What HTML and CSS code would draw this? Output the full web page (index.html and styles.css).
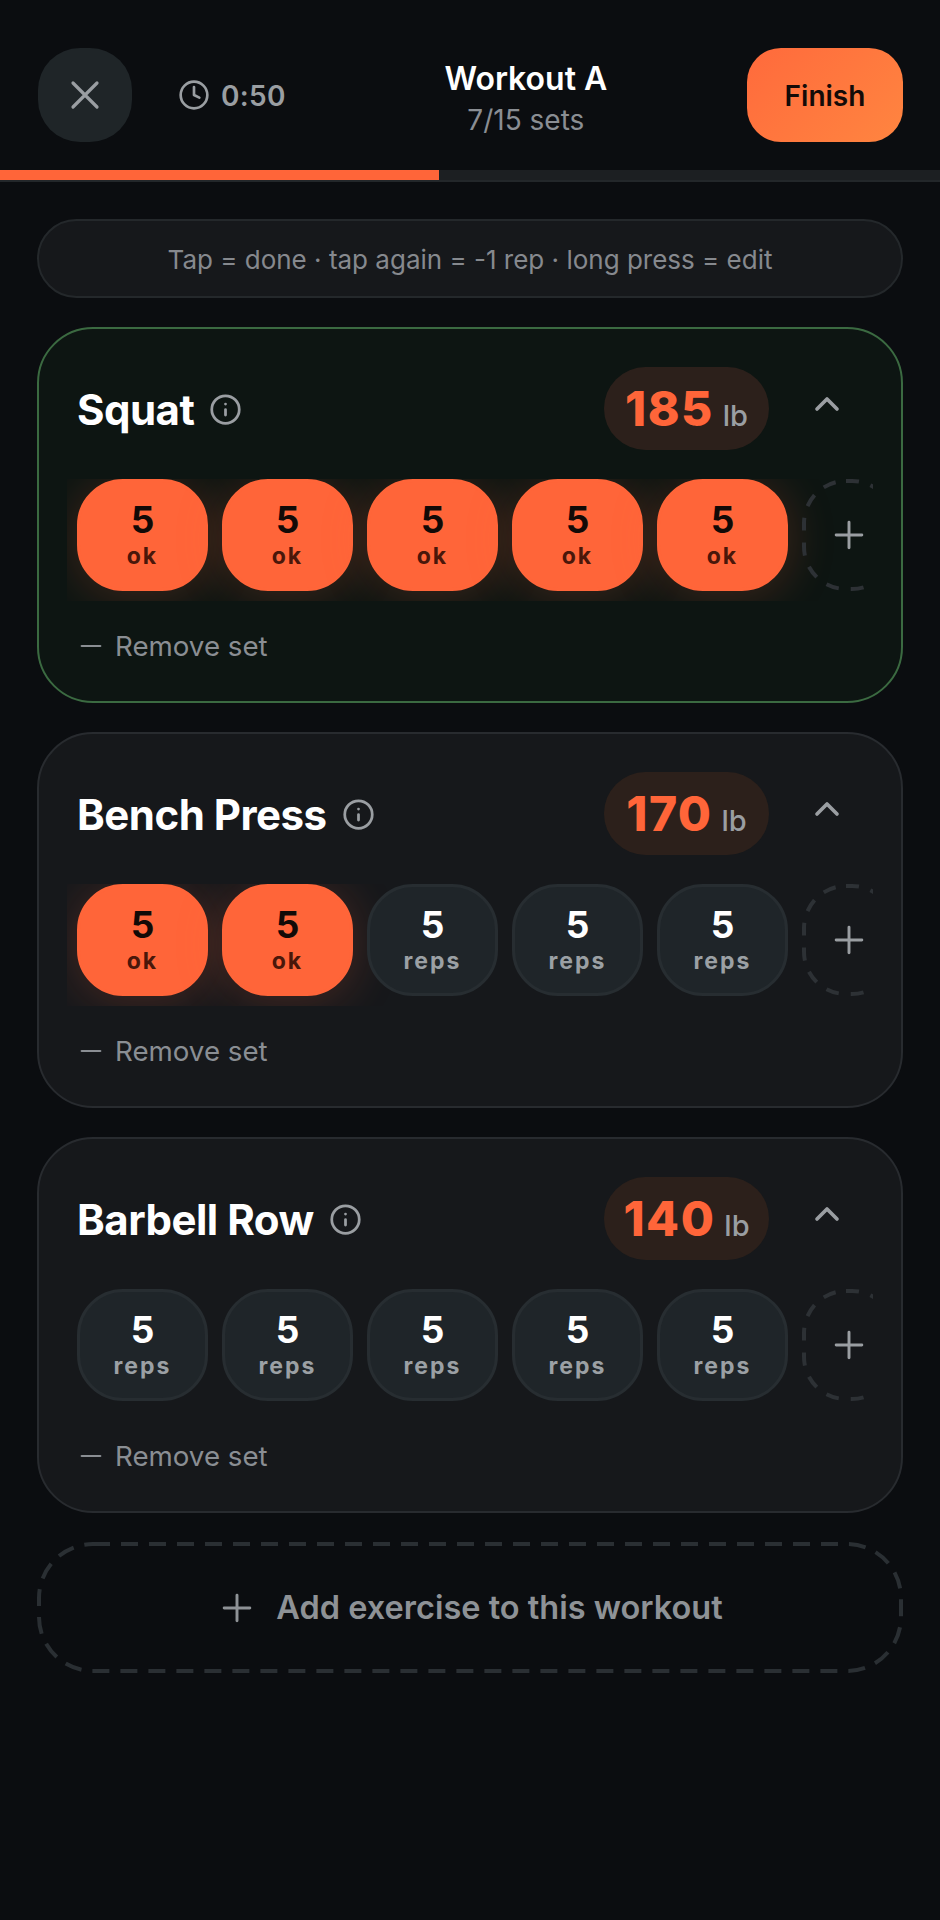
FILE: index.html
```html
<!DOCTYPE html>
<html lang="en">
<head>
<meta charset="utf-8">
<title>Workout A</title>
<link rel="stylesheet" href="styles.css">
</head>
<body>
<header class="topbar">
  <div class="topbar-left">
    <button class="close-btn"><svg class="ico ico-close" viewBox="0 0 24 24"><path d="M18 6 6 18M6 6l12 12"/></svg></button>
    <div class="timer"><svg class="ico ico-clock" viewBox="0 0 24 24"><circle cx="12" cy="12" r="10"/><path d="M12 6v6l4 2"/></svg><span>0:50</span></div>
  </div>
  <div class="title-block">
    <div class="title">Workout A</div>
    <div class="subtitle">7/15 sets</div>
  </div>
  <button class="finish-btn">Finish</button>
</header>
<div class="progress"><div class="progress-fill"></div></div>
<main class="content">
  <div class="hint">Tap = done · tap again = -1 rep · long press = edit</div>

  <section class="card card-done">
    <div class="card-head">
      <div class="name">Squat</div>
      <svg class="ico ico-info" viewBox="0 0 24 24"><circle cx="12" cy="12" r="10"/><path d="M12 16v-4M12 8h.01"/></svg>
      <div class="weight"><span class="weight-num">185</span><span class="weight-unit">lb</span></div>
      <svg class="ico ico-chev" viewBox="0 0 24 24"><path d="m18 15-6-6-6 6"/></svg>
    </div>
    <div class="sets">
      <div class="set set-done"><b>5</b><small>ok</small></div>
      <div class="set set-done"><b>5</b><small>ok</small></div>
      <div class="set set-done"><b>5</b><small>ok</small></div>
      <div class="set set-done"><b>5</b><small>ok</small></div>
      <div class="set set-done"><b>5</b><small>ok</small></div>
      <div class="set-add">
        <svg class="dash-frame" viewBox="0 0 94 112"><rect x="2" y="2" width="90" height="108" rx="42"/></svg>
        <svg class="ico ico-plus" viewBox="0 0 24 24"><path d="M5 12h14M12 5v14"/></svg>
      </div>
    </div>
    <div class="remove"><svg class="ico ico-minus" viewBox="0 0 24 24"><path d="M5 12h14"/></svg><span>Remove set</span></div>
  </section>

  <section class="card">
    <div class="card-head">
      <div class="name">Bench Press</div>
      <svg class="ico ico-info" viewBox="0 0 24 24"><circle cx="12" cy="12" r="10"/><path d="M12 16v-4M12 8h.01"/></svg>
      <div class="weight"><span class="weight-num">170</span><span class="weight-unit">lb</span></div>
      <svg class="ico ico-chev" viewBox="0 0 24 24"><path d="m18 15-6-6-6 6"/></svg>
    </div>
    <div class="sets">
      <div class="set set-done"><b>5</b><small>ok</small></div>
      <div class="set set-done"><b>5</b><small>ok</small></div>
      <div class="set"><b>5</b><small>reps</small></div>
      <div class="set"><b>5</b><small>reps</small></div>
      <div class="set"><b>5</b><small>reps</small></div>
      <div class="set-add">
        <svg class="dash-frame" viewBox="0 0 94 112"><rect x="2" y="2" width="90" height="108" rx="42"/></svg>
        <svg class="ico ico-plus" viewBox="0 0 24 24"><path d="M5 12h14M12 5v14"/></svg>
      </div>
    </div>
    <div class="remove"><svg class="ico ico-minus" viewBox="0 0 24 24"><path d="M5 12h14"/></svg><span>Remove set</span></div>
  </section>

  <section class="card">
    <div class="card-head">
      <div class="name">Barbell Row</div>
      <svg class="ico ico-info" viewBox="0 0 24 24"><circle cx="12" cy="12" r="10"/><path d="M12 16v-4M12 8h.01"/></svg>
      <div class="weight"><span class="weight-num">140</span><span class="weight-unit">lb</span></div>
      <svg class="ico ico-chev" viewBox="0 0 24 24"><path d="m18 15-6-6-6 6"/></svg>
    </div>
    <div class="sets">
      <div class="set"><b>5</b><small>reps</small></div>
      <div class="set"><b>5</b><small>reps</small></div>
      <div class="set"><b>5</b><small>reps</small></div>
      <div class="set"><b>5</b><small>reps</small></div>
      <div class="set"><b>5</b><small>reps</small></div>
      <div class="set-add">
        <svg class="dash-frame" viewBox="0 0 94 112"><rect x="2" y="2" width="90" height="108" rx="42"/></svg>
        <svg class="ico ico-plus" viewBox="0 0 24 24"><path d="M5 12h14M12 5v14"/></svg>
      </div>
    </div>
    <div class="remove"><svg class="ico ico-minus" viewBox="0 0 24 24"><path d="M5 12h14"/></svg><span>Remove set</span></div>
  </section>

  <button class="add-exercise">
    <svg class="dash-frame dash-wide" viewBox="0 0 866 131"><rect x="2" y="2" width="862" height="127" rx="54"/></svg>
    <svg class="ico ico-plus" viewBox="0 0 24 24"><path d="M5 12h14M12 5v14"/></svg><span>Add exercise to this workout</span>
  </button>
</main>
</body>
</html>
```
FILE: styles.css
```css
* { box-sizing: border-box; }
html, body { margin: 0; padding: 0; }
body {
  height: 1920px;
  overflow: hidden;
  background: #0b0d10;
  color: #fff;
  font-family: Inter, "Liberation Sans", sans-serif;
}
button { font-family: inherit; border: 0; padding: 0; }
.ico { display: block; fill: none; stroke: currentColor; stroke-linecap: round; stroke-linejoin: round; flex: none; }

.topbar { display: flex; align-items: center; padding: 48px 37px 28px 38px; }
.topbar-left { display: flex; align-items: center; gap: 46px; }
.close-btn {
  width: 94px; height: 94px; border-radius: 42px; background: #1f2528; color: #9a9ea2;
  display: flex; align-items: center; justify-content: center;
}
.ico-close { width: 48px; height: 48px; stroke-width: 1.6; }
.timer { display: flex; align-items: center; gap: 11px; color: #9a9ea2; font-size: 28px; font-weight: 600; letter-spacing: .3px; padding-top: 2px; }
.ico-clock { width: 32px; height: 32px; stroke-width: 2; margin-top: -2px; }
.title-block { flex: 1; text-align: center; padding: 5px 0 0 19px; }
.title { font-size: 32px; font-weight: 600; line-height: 40px; padding-top: 2px; }
.subtitle { font-size: 28px; line-height: 36px; color: #8a8e93; margin-top: 3px; }
.finish-btn {
  width: 156px; height: 94px; border-radius: 34px; padding-top: 2px;
  background: linear-gradient(135deg, #ff6a3c, #ff8540);
  color: #140b08; font-size: 28px; font-weight: 600;
}

.progress { height: 12px; background: #1c1f22; border-bottom: 2px solid #23272a; }
.progress-fill { width: 46.67%; height: 10px; background: #ff6539; }

.content { padding: 37px 37px 0; display: flex; flex-direction: column; gap: 29px; }
.hint {
  height: 79px; padding-top: 2px; border-radius: 40px; background: #16181b; border: 2px solid #24282b;
  display: flex; align-items: center; justify-content: center;
  color: #86898e; font-size: 26px;
}
.card { border: 2px solid #282b2f; border-radius: 56px; background: #16181b; padding: 38px 0 0 38px; height: 376px; }
.card-done { background: #0d1512; border-color: #3b6a41; }
.card-head { display: flex; align-items: center; height: 83px; padding-right: 54px; }
.name { font-size: 42px; font-weight: 700; letter-spacing: -.5px; padding-top: 2px; }
.ico-info { width: 33px; height: 33px; margin: 2px 0 0 15px; stroke-width: 2; color: #9a9ea2; }
.weight {
  margin-left: auto; width: 165px; height: 83px; border-radius: 42px; background: #2c201b;
  display: flex; align-items: baseline; justify-content: center; gap: 9px; line-height: 83px;
}
.weight-num { color: #ff6539; font-size: 48px; font-weight: 800; letter-spacing: 1.5px; }
.weight-unit { color: #9a9ea2; font-size: 29px; font-weight: 500; }
.ico-chev { width: 40px; height: 40px; stroke-width: 2.2; color: #9a9ea2; margin: -9px 0 0 38px; }

.sets {
  display: flex; gap: 14px; margin: 29px 0 0 -10px; width: 806px; padding: 0 0 10px 10px; overflow: hidden;
}
.set {
  flex: none; width: 131px; height: 112px; border-radius: 46px;
  background: #1f2529; border: 3px solid #272d31;
  display: flex; flex-direction: column; align-items: center; justify-content: center;
}
.set b { font-size: 37px; font-weight: 700; line-height: 40px; color: #fff; }
.set small { font-size: 23px; font-weight: 700; line-height: 28px; margin-top: 2px; color: #9ba0a4; letter-spacing: 2px; }
.set-done { background: #ff6539; border-color: #ff6539; box-shadow: 0 4px 48px rgba(255,101,57,.22); }
.set-done b { color: #120a07; }
.set-done small { color: #4a170a; }
.set-add {
  flex: none; position: relative; width: 94px; height: 112px;
  display: flex; align-items: center; justify-content: center; color: #9a9ea2;
}
.dash-frame { position: absolute; inset: 0; width: 100%; height: 100%; fill: none; stroke: #2d3135; stroke-width: 4; stroke-dasharray: 13 12; }
.dash-wide { stroke: #2a2f33; stroke-dasharray: 17 11; }
.ico-plus { width: 44px; height: 44px; stroke-width: 1.6; }
.remove { display: flex; align-items: center; gap: 8px; margin: 28px 0 0 -2px; color: #8a8e93; font-size: 27.7px; line-height: 34px; }
.ico-minus { width: 32px; height: 32px; stroke-width: 1.6; }

.add-exercise {
  position: relative;
  height: 131px; background: transparent; padding-right: 2px;
  display: flex; align-items: center; justify-content: center; gap: 17px; color: #8e9296; font-size: 32.5px; font-weight: 600;
}
```
